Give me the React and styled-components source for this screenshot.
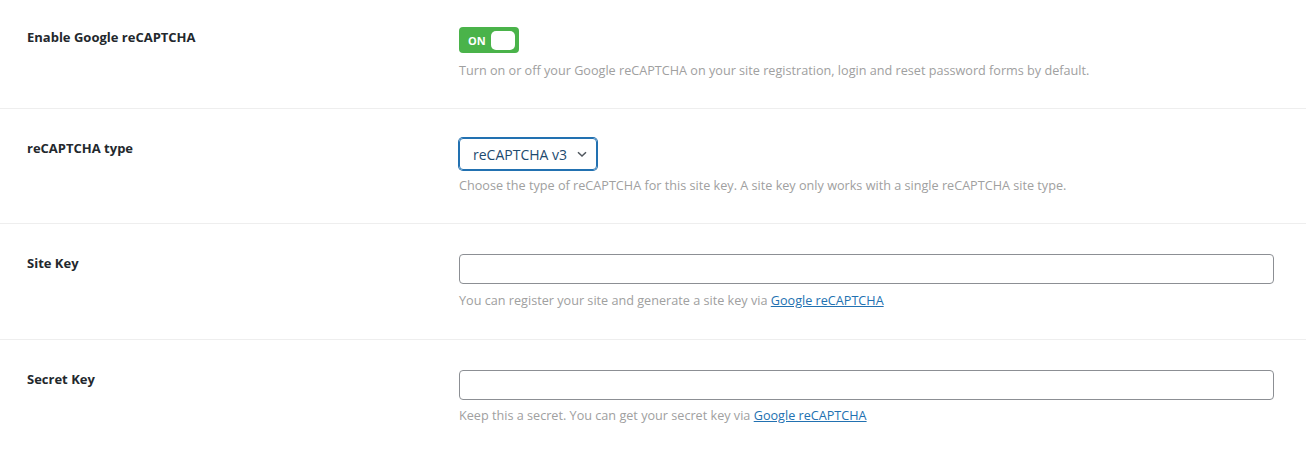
import styled, { createGlobalStyle } from "styled-components"

const GlobalStyle = createGlobalStyle`
    html, body {
        margin: 0;
        padding: 0;
        background: #ffffff;
        font-family: "Open Sans", "Liberation Sans", sans-serif;
    }
`

const Settings = styled.div`
    width: 1306px;
    background: #ffffff;
`

const Row = styled.div`
    display: grid;
    grid-template-columns: 432px 815px;
    padding: ${(p) => p.$pad || "28px 0 28px 27px"};
    border-bottom: ${(p) => (p.$last ? "none" : "1px solid #eeeeee")};
`

const Label = styled.div`
    font-size: 13px;
    font-weight: 700;
    color: #23282d;
    line-height: 20px;
    margin-top: ${(p) => p.$top || "0px"};
`

const Control = styled.div`
    display: flex;
    flex-direction: column;
    align-items: flex-start;
    gap: ${(p) => p.$gap || "8px"};
`

const Toggle = styled.div`
    display: flex;
    align-items: center;
    justify-content: space-between;
    box-sizing: border-box;
    width: 60px;
    height: 26px;
    padding: 0 4px 0 9px;
    background: #4ab34a;
    border-radius: 4px;
    color: #ffffff;
    font-size: 11px;
    font-weight: 700;
`

const Knob = styled.span`
    width: 24px;
    height: 19px;
    background: #ffffff;
    border-radius: 5px;
`

const Select = styled.div`
    display: flex;
    align-items: center;
    gap: 9px;
    box-sizing: border-box;
    height: 32px;
    padding: 0 8px 0 13px;
    border: 1px solid #2271b1;
    border-radius: 4px;
    box-shadow: 0 0 0 1px #2271b1;
    color: #1d4a6e;
    font-size: 14px;
`

const Input = styled.input`
    box-sizing: border-box;
    width: 815px;
    height: 30px;
    border: 1px solid #8c8f94;
    border-radius: 4px;
    background: #ffffff;
    outline: none;
`

const Help = styled.p`
    margin: 0;
    font-size: 12.65px;
    line-height: 20px;
    color: #a0a0a0;

    a {
        color: #2271b1;
        text-decoration: underline;
    }
`

export default function App() {
    return (
        <>
            <GlobalStyle />
            <Settings>
                <Row $pad="27px 0 28px 27px">
                    <Label $top="0px">Enable Google reCAPTCHA</Label>
                    <Control $gap="7px">
                        <Toggle>
                            ON
                            <Knob />
                        </Toggle>
                        <Help>
                            Turn on or off your Google reCAPTCHA on your site registration, login and reset password forms by default.
                        </Help>
                    </Control>
                </Row>
                <Row $pad="29px 0 28px 27px">
                    <Label $top="0px">reCAPTCHA type</Label>
                    <Control $gap="5px">
                        <Select>
                            reCAPTCHA v3
                            <svg width="12" height="12" viewBox="0 0 12 12" fill="none">
                                <path d="M2 4.2 6 8l4-3.8" stroke="#50575e" strokeWidth="1.5" />
                            </svg>
                        </Select>
                        <Help>
                            Choose the type of reCAPTCHA for this site key. A site key only works with a single reCAPTCHA site type.
                        </Help>
                    </Control>
                </Row>
                <Row $pad="30px 0 29px 27px">
                    <Label $top="-1px">Site Key</Label>
                    <Control $gap="6px">
                        <Input type="text" />
                        <Help>
                            You can register your site and generate a site key via <a href="#">Google reCAPTCHA</a>
                        </Help>
                    </Control>
                </Row>
                <Row $pad="30px 0 28px 27px" $last>
                    <Label $top="-1px">Secret Key</Label>
                    <Control $gap="5px">
                        <Input type="password" />
                        <Help>
                            Keep this a secret. You can get your secret key via <a href="#">Google reCAPTCHA</a>
                        </Help>
                    </Control>
                </Row>
            </Settings>
        </>
    )
}
